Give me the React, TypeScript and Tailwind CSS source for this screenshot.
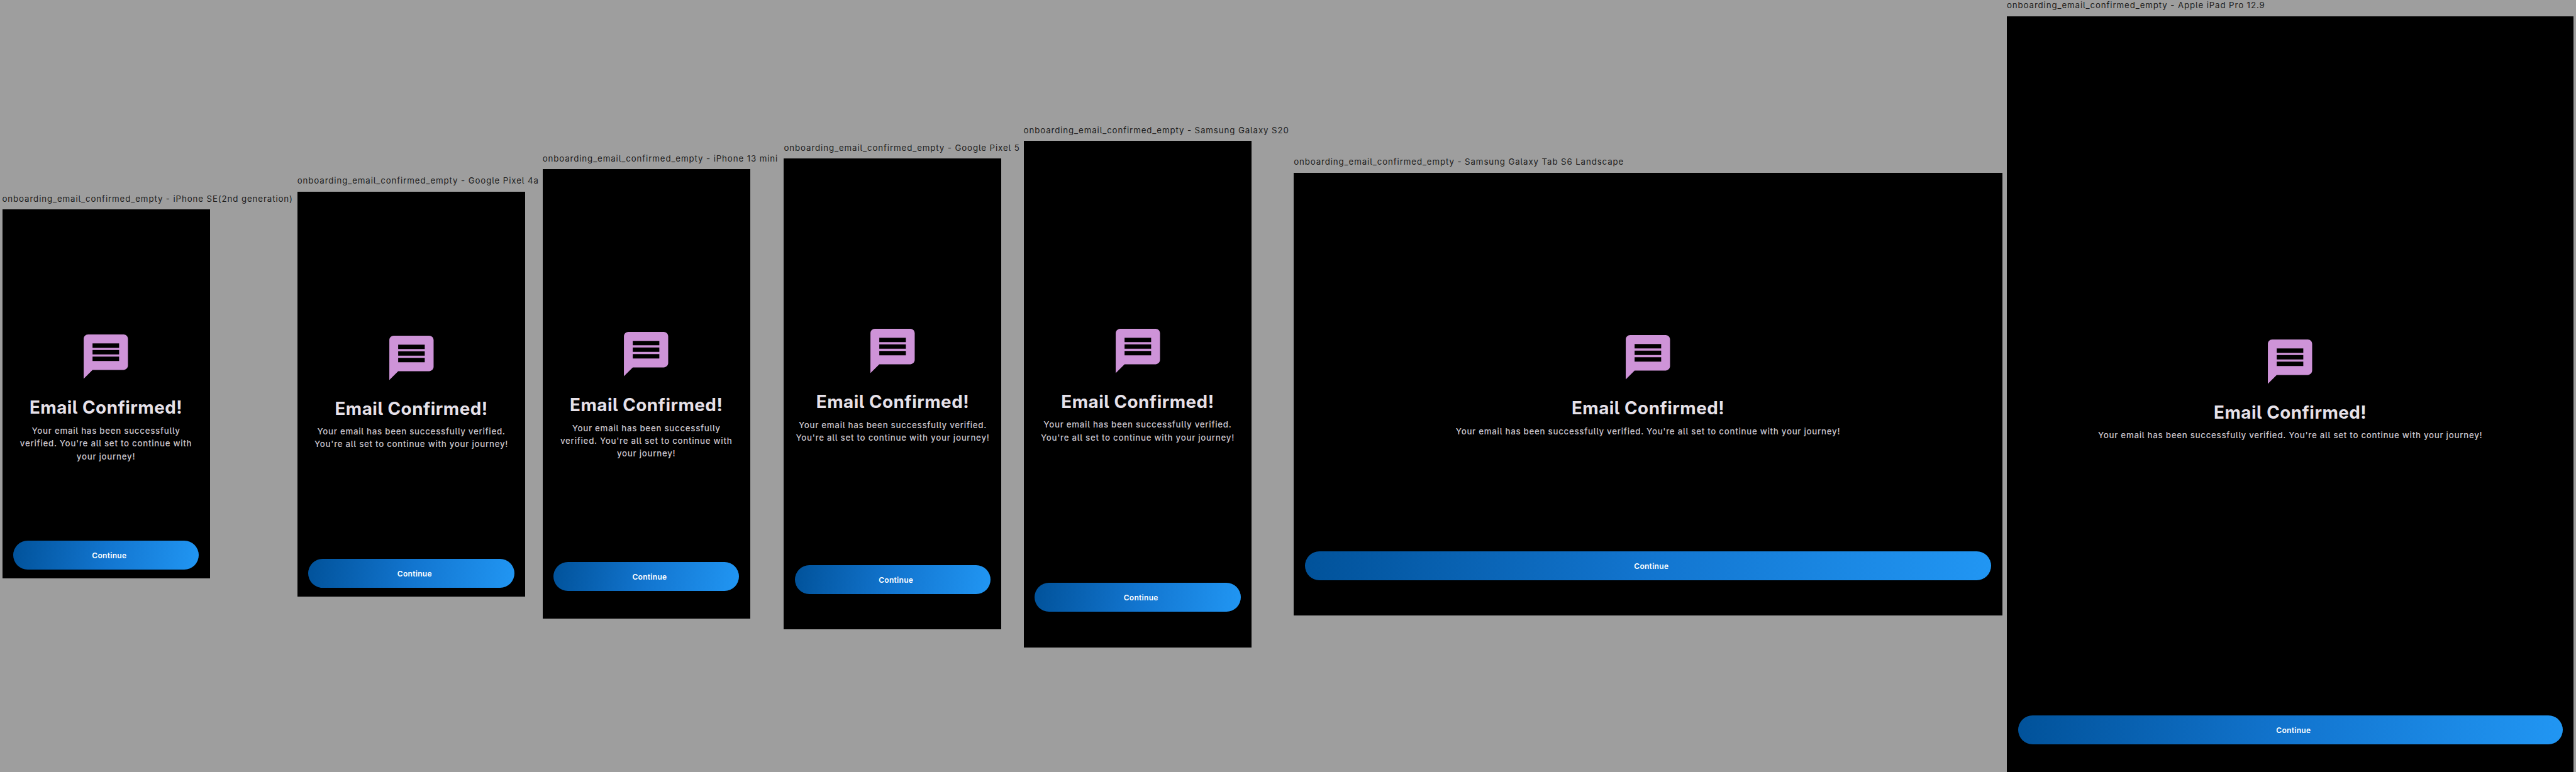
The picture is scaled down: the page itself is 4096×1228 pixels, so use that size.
import { MdMessage } from "react-icons/md";

type Device = {
  name: string;
  column: string;
  frame: string;
  button: string;
  twoLines?: boolean;
  threeLines?: boolean;
};

const devices: Device[] = [
  { name: "iPhone SE(2nd generation)", column: "w-[462.2px]", frame: "w-[330.1px] h-[587.2px] pt-[192.3px] pb-[14.1px]", button: "bg-[linear-gradient(99deg,#01529a,#1275cf_50%,#2196f3)]", threeLines: true },
  { name: "Google Pixel 4a", column: "w-[382.9px]", frame: "w-[362.7px] h-[644.4px] pt-[222px] pb-[14.1px]", button: "bg-[linear-gradient(98deg,#01529a,#1275cf_50%,#2196f3)]", twoLines: true },
  { name: "iPhone 13 mini", column: "w-[376.8px]", frame: "w-[330.1px] h-[714.8px] pt-[251.8px] pb-[44px]", button: "bg-[linear-gradient(99deg,#01529a,#1275cf_50%,#2196f3)]", threeLines: true },
  { name: "Google Pixel 5", column: "w-[374.1px]", frame: "w-[346px] h-[749.1px] pt-[263.8px] pb-[56.3px]", button: "bg-[linear-gradient(98deg,#01529a,#1275cf_50%,#2196f3)]", twoLines: true },
  { name: "Samsung Galaxy S20", column: "w-[422.5px]", frame: "w-[362.7px] h-[805.5px] pt-[291.8px] pb-[56.3px]", button: "bg-[linear-gradient(98deg,#01529a,#1275cf_50%,#2196f3)]", twoLines: true },
  { name: "Samsung Galaxy Tab S6 Landscape", column: "w-[1126.8px]", frame: "w-[1126.8px] h-[704.2px] pt-[251.8px] pb-[56.3px]", button: "bg-[linear-gradient(92deg,#01529a,#1275cf_50%,#2196f3)]" },
  { name: "Apple iPad Pro 12.9", column: "w-[901.4px]", frame: "w-[901.4px] h-[1202.5px] pt-[507px] pb-[44.4px]", button: "bg-[linear-gradient(93deg,#01529a,#1275cf_50%,#2196f3)]" },
];

function Message({ device }: { device: Device }) {
  if (device.threeLines) {
    return (
      <>
        Your email has been successfully
        <br />
        verified. You're all set to continue with
        <br />
        your journey!
      </>
    );
  }
  if (device.twoLines) {
    return (
      <>
        Your email has been successfully verified.
        <br />
        You're all set to continue with your journey!
      </>
    );
  }
  return <>Your email has been successfully verified. You're all set to continue with your journey!</>;
}

function DevicePreview({ device }: { device: Device }) {
  return (
    <section className={`flex shrink-0 flex-col ${device.column}`}>
      <div className="h-[25.5px] whitespace-nowrap text-[13.3px] leading-[17px] tracking-[0.88px] text-[#1c1c1c]">
        onboarding_email_confirmed_empty - {device.name}
      </div>
      <div className={`flex flex-col items-center bg-black px-[17.6px] ${device.frame}`}>
        <MdMessage className="size-[84.5px] shrink-0 text-[#ce93d8]" />
        <h1 className="mt-[22.5px] whitespace-nowrap text-[27.8px] font-bold leading-[33px] tracking-[0.5px] text-[#e6e1e9]">Email Confirmed!</h1>
        <p className="mt-[9.5px] whitespace-nowrap text-center text-[13.3px] font-medium leading-[20.3px] tracking-[0.72px] text-[#cac5cd]">
          <Message device={device} />
        </p>
        <button className={`mt-auto h-[46px] w-full shrink-0 rounded-full pl-[10.5px] pt-[2px] text-[12px] font-semibold leading-[16px] tracking-[0.3px] text-white ${device.button}`}>
          Continue
        </button>
      </div>
    </section>
  );
}

export default function App() {
  return (
    <main className="flex h-[1228px] w-[4096px] items-center gap-[7.04px] overflow-hidden bg-[#9e9e9e] pl-[3.5px] font-['Inter',sans-serif] [font-feature-settings:'cv05']">
      {devices.map((device) => (
        <DevicePreview key={device.name} device={device} />
      ))}
    </main>
  );
}
